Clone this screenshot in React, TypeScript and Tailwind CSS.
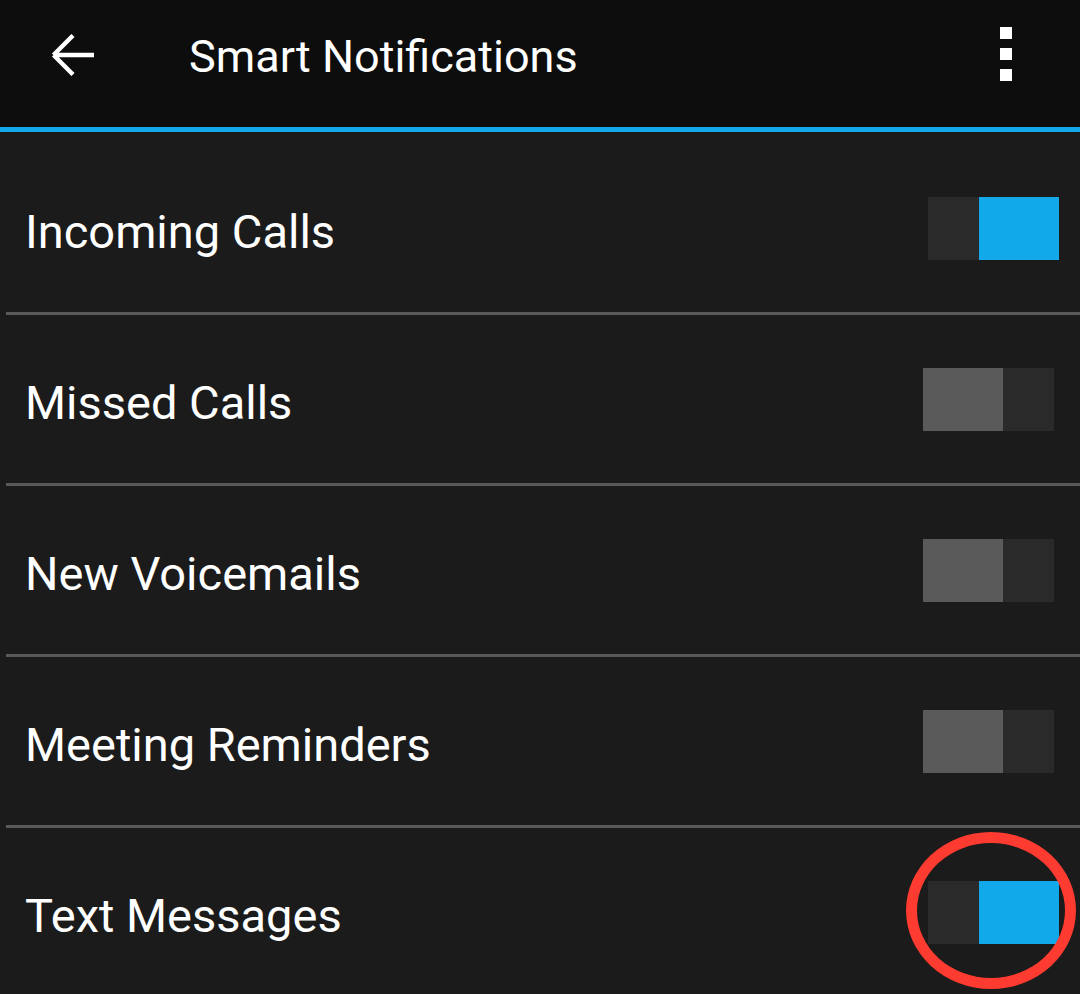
import { useState } from "react";

const items = [
  { label: "Incoming Calls", on: true },
  { label: "Missed Calls", on: false },
  { label: "New Voicemails", on: false },
  { label: "Meeting Reminders", on: false },
  { label: "Text Messages", on: true, marked: true },
];

function Toggle({ on, onClick }: { on: boolean; onClick: () => void }) {
  return (
    <button
      onClick={onClick}
      className={`flex h-[63px] w-[131px] shrink-0 ${on ? "mr-[21px]" : "mr-[26px]"}`}
    >
      {on ? (
        <>
          <span className="h-full w-[51px] bg-[#2a2a2a]" />
          <span className="h-full w-[80px] bg-[#12a9ea]" />
        </>
      ) : (
        <>
          <span className="h-full w-[80px] bg-[#5a5a5a]" />
          <span className="h-full w-[51px] bg-[#2a2a2a]" />
        </>
      )}
    </button>
  );
}

export default function App() {
  const [state, setState] = useState(items.map((i) => i.on));

  return (
    <div
      className="h-[994px] w-[1080px] overflow-hidden bg-[#1b1b1b] text-white"
      style={{ fontFamily: "Roboto, 'Noto Sans', sans-serif" }}
    >
      {/* app bar */}
      <header className="h-[132px] border-b-[5px] border-[#12a9ea] bg-[#0d0d0d] pb-[19px]">
        <div className="flex h-[108px] items-center">
          <svg width="46" height="42" viewBox="0 0 46 42" className="ml-[50px] mt-[2px]" fill="none">
            <path d="M3.5 21 L23 1.5 M3.5 21 L23 40.5 M3.5 21 H44" stroke="white" strokeWidth="4.4" />
          </svg>
          <h1 className="ml-[93px] mt-[5px] text-[45px] leading-none">Smart Notifications</h1>
          <div className="ml-auto mr-[68px] flex flex-col gap-[9px]">
            <span className="h-[12px] w-[12px] bg-white" />
            <span className="h-[12px] w-[12px] bg-white" />
            <span className="h-[12px] w-[12px] bg-white" />
          </div>
        </div>
      </header>

      <ul className="pt-[12px]">
        {items.map((item, i) => (
          <li key={item.label}>
            {i > 0 && <div className="ml-[6px] h-[3px] bg-[#595959]" />}
            <div className="relative flex h-[168px] items-center justify-between">
              <span className="mt-[6px] pl-[25px] text-[47px] leading-none">{item.label}</span>
              <Toggle
                on={state[i]}
                onClick={() => setState((s) => s.map((v, j) => (j === i ? !v : v)))}
              />
              {item.marked && (
                <span className="pointer-events-none absolute right-[4px] top-[4px] h-[157px] w-[170px] rounded-[50%] border-[11px] border-[#fe3b30]" />
              )}
            </div>
          </li>
        ))}
      </ul>
    </div>
  );
}
